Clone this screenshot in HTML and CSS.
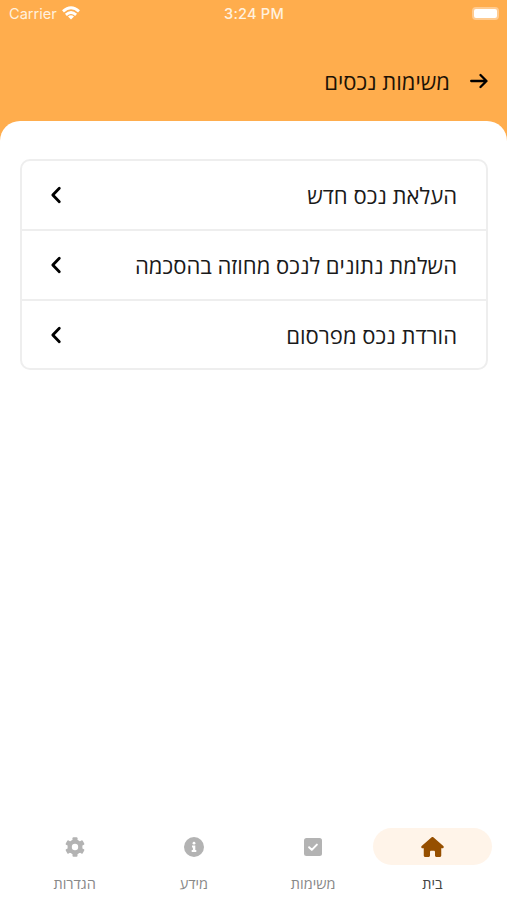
FILE: index.html
```
<!DOCTYPE html>
<html lang="he" dir="rtl">
<head>
<meta charset="utf-8">
<title>משימות נכסים</title>
<link rel="stylesheet" href="styles.css">
</head>
<body>
<div class="app">
  <div class="status" dir="ltr">
    <div class="carrier"><span>Carrier</span>
      <svg class="wifi" viewBox="0 0 18 14" width="18" height="14" fill="none" stroke="currentColor" stroke-width="2.8"><path d="M1 5.4Q9-1.9 17 5.4M3.9 8.9Q9 4.2 14.1 8.9"/><path d="M9 13.6 6 10.5Q9 8 12 10.5Z" fill="currentColor" stroke="none"/></svg>
    </div>
    <div class="time">3:24 PM</div>
    <div class="power"><span class="battery"></span></div>
  </div>
  <header class="header">
    <svg class="back" viewBox="0 0 18 16" width="18" height="16"><path d="M1.2 8h15M10.5 2l6 6-6 6"/></svg>
    <h1>משימות נכסים</h1>
  </header>
  <main class="sheet">
    <ul class="list">
      <li><span>העלאת נכס חדש</span><svg class="chev" viewBox="0 0 12 18" width="12" height="18"><path d="M9.3 2.2 2.8 9l6.5 6.8"/></svg></li>
      <li><span>השלמת נתונים לנכס מחוזה בהסכמה</span><svg class="chev" viewBox="0 0 12 18" width="12" height="18"><path d="M9.3 2.2 2.8 9l6.5 6.8"/></svg></li>
      <li><span>הורדת נכס מפרסום</span><svg class="chev" viewBox="0 0 12 18" width="12" height="18"><path d="M9.3 2.2 2.8 9l6.5 6.8"/></svg></li>
    </ul>
  </main>
  <nav class="tabs">
    <a class="tab active"><span class="pill"><svg viewBox="0 0 576 512" width="23" height="20"><path d="M575.8 255.5c0 18-15 32.1-32 32.1h-32l.7 160.2c0 2.7-.2 5.4-.5 8.1V472c0 22.1-17.9 40-40 40H392c-22.1 0-40-17.9-40-40V384c0-17.7-14.3-32-32-32H256c-17.7 0-32 14.3-32 32v88c0 22.1-17.9 40-40 40H104c-22.1 0-40-17.9-40-40V287.6H32c-18 0-32-14-32-32.1c0-9 3-17 10-24L266.4 8c7-7 15-8 22-8s15 2 21 7L564.8 231.5c8 7 12 15 11 24z"/></svg></span><span class="label">בית</span></a>
    <a class="tab"><span class="pill"><svg viewBox="0 0 18 18" width="18" height="18"><rect width="18" height="18" rx="2.5"/><path class="cut" d="m5.1 9.3 2.7 2.6 5.1-5.3"/></svg></span><span class="label">משימות</span></a>
    <a class="tab"><span class="pill"><svg viewBox="0 0 20 20" width="20" height="20"><circle cx="10" cy="10" r="10"/><circle class="hole" cx="10" cy="6.2" r="1.4"/><path class="hole" d="M8 8.6h3.3v4.5h1V15H7.7v-1.9h1.2v-2.5H8z"/></svg></span><span class="label">מידע</span></a>
    <a class="tab"><span class="pill"><svg viewBox="-10 -10 20 20" width="20" height="20"><circle r="7.5"/><rect x="-2.5" y="-9.8" width="5" height="19.6" rx="1"/><rect x="-2.5" y="-9.8" width="5" height="19.6" rx="1" transform="rotate(60)"/><rect x="-2.5" y="-9.8" width="5" height="19.6" rx="1" transform="rotate(120)"/><circle class="hole" r="3.2"/></svg></span><span class="label">הגדרות</span></a>
  </nav>
</div>
</body>
</html>
```
FILE: styles.css
```
* { box-sizing: border-box; }
body { margin: 0; background: #ffad4d; font-family: "Open Sans", "Noto Sans", sans-serif; }
.app { height: 900px; display: flex; flex-direction: column; overflow: hidden; }
.status { height: 28px; display: grid; grid-template-columns: 1fr auto 1fr; align-items: center; padding: 0 8px 0 9px; color: #fff1df; font: 14.6px/28px Inter, sans-serif; }
.carrier { display: flex; align-items: center; gap: 5px; }
.wifi { color: #fff; margin-top: -2px; }
.time { font-weight: 500; letter-spacing: .2px; }
.power { display: flex; justify-content: flex-end; margin-top: -1px; }
.battery { width: 27px; height: 13px; border: 2px solid #ffcb90; border-radius: 4px; background: #fff; }
.header { height: 93px; display: flex; align-items: center; padding: 13px 19px 0 0; gap: 20px; }
.header h1 { margin: 0; padding-bottom: 1px; font-size: 22px; line-height: 30px; font-weight: 400; color: #1c1206; white-space: nowrap; }
.back, .chev, .cut { fill: none; stroke: #000; stroke-linecap: round; stroke-linejoin: round; }
.back { stroke-width: 2.3; }
.chev { stroke-width: 2.8; }
.sheet { flex: 1; background: #fff; border-radius: 20px 20px 0 0; padding: 38px 19px 0 20px; }
.list { list-style: none; margin: 0; padding: 0; border: 2px solid #eee; border-radius: 10px; }
.list li { height: 70px; display: flex; align-items: center; justify-content: space-between; padding: 0 29px 0 28px; color: #1a1a1a; font-size: 22.05px; line-height: 30px; white-space: nowrap; }
.list li + li { border-top: 2px solid #eee; }
.list li:first-child { height: 68px; }
.list li:last-child { height: 69px; }
.tabs { height: 72px; background: #fff; display: flex; padding: 0 15px; }
.tab { flex: 1; display: flex; flex-direction: column; align-items: center; color: #888; fill: #b3b3b3; }
.pill { width: 100%; height: 37px; border-radius: 19px; display: flex; align-items: center; justify-content: center; }
.active { color: #444; fill: #964f00; }
.active .pill { background: #fff4e9; }
.label { font-size: 14.5px; line-height: 20px; margin-top: 9px; }
.cut { stroke: #fff; stroke-width: 2; }
.hole { fill: #fff; }
```
